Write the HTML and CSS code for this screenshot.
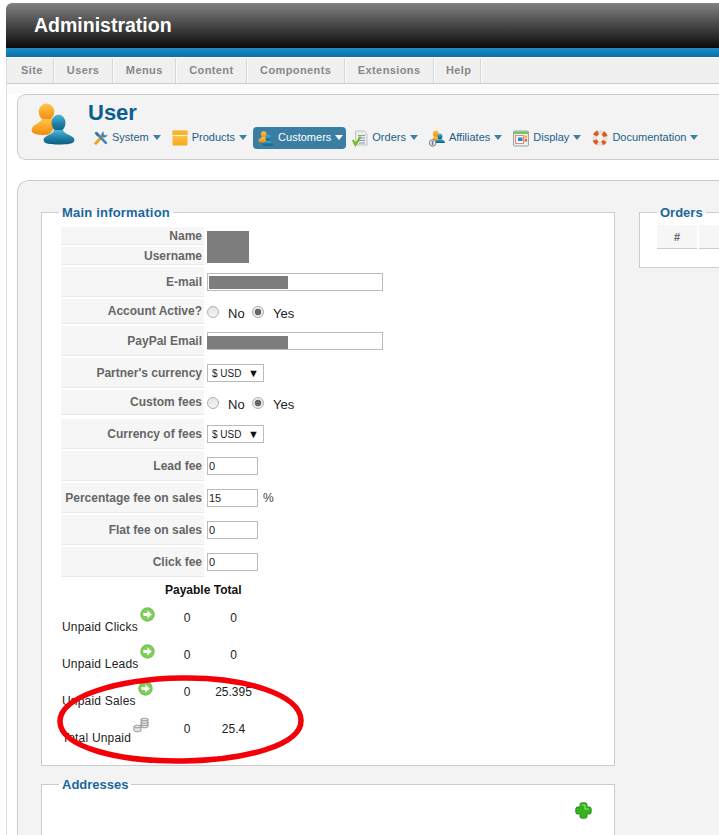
FILE: index.html
```html
<!DOCTYPE html>
<html lang="en">
<head>
<meta charset="utf-8">
<title>Administration</title>
<link rel="stylesheet" href="styles.css">
</head>
<body>
<svg class="defs" aria-hidden="true">
  <defs>
    <linearGradient id="gOrange" x1="0" y1="0" x2="0" y2="1"><stop offset="0" stop-color="#ffc648"/><stop offset="1" stop-color="#f08a0c"/></linearGradient>
    <linearGradient id="gBlue" x1="0" y1="0" x2="0" y2="1"><stop offset="0" stop-color="#4fb8dc"/><stop offset="0.55" stop-color="#1f7fa6"/><stop offset="1" stop-color="#0f5f80"/></linearGradient>
    <linearGradient id="gBox" x1="0" y1="0" x2="0" y2="1"><stop offset="0" stop-color="#ffd45e"/><stop offset="1" stop-color="#f8a818"/></linearGradient>
    <symbol id="people" viewBox="0 0 44 42">
      <ellipse cx="15.5" cy="9" rx="7.8" ry="8.6" fill="url(#gOrange)"/>
      <path d="M11 16 C9 21 1 21 0.6 27 C0.4 31 6 32 14 32 C18 32 20 30 22 27 L24 16 Z" fill="url(#gOrange)"/>
      <ellipse cx="27.5" cy="20" rx="7" ry="8.6" fill="url(#gBlue)"/>
      <path d="M23 27 C22 32 13 32 12.5 37 C12.5 41 20 41.5 28 41.5 C36 41.5 43.5 41 43.5 37 C43 32 33.5 32 32 27 Z" fill="url(#gBlue)"/>
    </symbol>
    <symbol id="go" viewBox="0 0 15 15">
      <circle cx="7.5" cy="7.5" r="7.2" fill="#76c652"/>
      <circle cx="7.5" cy="7.5" r="5.6" fill="#82d05c"/>
      <path d="M3.2 6 H7.4 V3.4 L11.8 7.5 L7.4 11.6 V9 H3.6 Z" fill="#fff"/>
    </symbol>
  </defs>
</svg>

<header class="brand">
  <div class="brand-bar"><h1 class="brand-title">Administration</h1></div>
  <div class="brand-stripe"></div>
</header>

<div class="shell">
  <nav class="topnav">
    <a class="topnav-item">Site</a>
    <a class="topnav-item">Users</a>
    <a class="topnav-item">Menus</a>
    <a class="topnav-item">Content</a>
    <a class="topnav-item">Components</a>
    <a class="topnav-item">Extensions</a>
    <a class="topnav-item">Help</a>
  </nav>

  <div class="workspace">
    <section class="toolbar">
      <svg class="toolbar-logo" width="44" height="42"><use href="#people"/></svg>
      <div class="toolbar-body">
        <h2 class="toolbar-title">User</h2>
        <ul class="menu">
          <li class="menu-item">
            <svg class="menu-icon" width="14" height="16" viewBox="0 0 16 17">
              <path d="M2 14.5 L10 6" stroke="#f0a020" stroke-width="3.4" stroke-linecap="round"/>
              <path d="M3 3 L13.5 14" stroke="#3f86b8" stroke-width="3" stroke-linecap="round"/>
              <path d="M2 1.5 L6 5 L4 7 L0.8 3.4 Z" fill="#3f6f98"/>
              <path d="M11 1 A4 4 0 0 0 8.8 6.6 L11 8 A4 4 0 0 0 15.3 4.6 L12.8 5.6 L11 4 Z" fill="#4d7fa6"/>
            </svg>
            <span>System</span><i class="caret"></i>
          </li>
          <li class="menu-item">
            <svg class="menu-icon" width="16" height="16" viewBox="0 0 16 16">
              <rect x="0.5" y="0.5" width="15" height="15" rx="1" fill="url(#gBox)"/>
              <rect x="0.5" y="0.5" width="15" height="5" fill="#f6b430"/>
              <path d="M0.5 5.5 H15.5" stroke="#fff3c4" stroke-width="1"/>
            </svg>
            <span>Products</span><i class="caret"></i>
          </li>
          <li class="menu-item is-active">
            <svg class="menu-icon" width="16" height="15"><use href="#people"/></svg>
            <span>Customers</span><i class="caret"></i>
          </li>
          <li class="menu-item">
            <svg class="menu-icon" width="16" height="17" viewBox="0 0 16 17">
              <path d="M3.5 1 H12 L15 4 V15 H3.5 Z" fill="#e8edf0" stroke="#b4bcc2" stroke-width="0.8"/>
              <path d="M6 5.5 H13 M6 8 H13 M6 10.5 H13 M7 13 H13" stroke="#8e9ba4" stroke-width="1"/>
              <path d="M0.8 10 L3.4 14.8 L8.6 6.6" fill="none" stroke="#7cb92a" stroke-width="2.2"/>
            </svg>
            <span>Orders</span><i class="caret"></i>
          </li>
          <li class="menu-item">
            <svg class="menu-icon" width="16" height="17" viewBox="0 0 16 17">
              <ellipse cx="6.8" cy="3.8" rx="2.9" ry="3.4" fill="url(#gOrange)"/>
              <path d="M3.5 11 C3.5 7.5 5 6.5 6.8 6.5 C8.5 6.5 9.8 8 10 11 Z" fill="url(#gOrange)"/>
              <ellipse cx="11" cy="6.5" rx="2.4" ry="3" fill="url(#gBlue)"/>
              <path d="M6.5 13 C7 10 9 9 11 9 C13.5 9 15.6 10.5 16 13 Z" fill="url(#gBlue)"/>
              <circle cx="3.6" cy="13" r="3.3" fill="#e4e9ee" stroke="#5c7d98" stroke-width="0.9"/>
              <path d="M3.6 10.8 V15.2 M2.6 12 H4.6 M2.6 14 H4.6" stroke="#4f6f8a" stroke-width="0.8"/>
            </svg>
            <span>Affiliates</span><i class="caret"></i>
          </li>
          <li class="menu-item">
            <svg class="menu-icon" width="16" height="17" viewBox="0 0 16 17">
              <rect x="0.5" y="1" width="15" height="15" rx="1" fill="#e9eef0" stroke="#9aa5a8"/>
              <rect x="1" y="1.5" width="14" height="2.4" fill="#6fc35a"/>
              <rect x="2.5" y="5.5" width="8" height="8" fill="#f4f7f8" stroke="#e08a86"/>
              <rect x="5" y="7.5" width="4.5" height="3.5" fill="#2d86b8"/>
              <rect x="11.5" y="5.5" width="2.6" height="2.6" fill="#f4b43c"/>
              <rect x="11.5" y="9" width="2.6" height="2.6" fill="#e4664a"/>
            </svg>
            <span>Display</span><i class="caret"></i>
          </li>
          <li class="menu-item">
            <svg class="menu-icon" width="16" height="16" viewBox="0 0 16 16">
              <circle cx="8" cy="8" r="5.6" fill="none" stroke="#e8e2dc" stroke-width="4.4"/>
              <circle cx="8" cy="8" r="5.6" fill="none" stroke="#dd5a20" stroke-width="4.4" stroke-dasharray="4.4 4.4" stroke-dashoffset="2.2" transform="rotate(45 8 8)"/>
            </svg>
            <span>Documentation</span><i class="caret"></i>
          </li>
        </ul>
      </div>
    </section>

    <main class="panel">
      <div class="panel-left">
        <fieldset class="box box-main">
          <legend class="box-legend">Main information</legend>

          <div class="row row-s"><label class="row-label">Name</label><div class="row-value"></div></div>
          <div class="row row-s"><label class="row-label">Username</label><div class="row-value"></div></div>
          <div class="redact redact-name"></div>

          <div class="row row-l"><label class="row-label">E-mail</label><div class="row-value"><span class="masked"><input class="field field-wide" type="text"><span class="redact redact-mail"></span></span></div></div>
          <div class="row row-m"><label class="row-label">Account Active?</label><div class="row-value">
            <input class="radio" type="radio" name="active"><span class="radio-text">No</span>
            <input class="radio" type="radio" name="active" checked><span class="radio-text">Yes</span>
          </div></div>
          <div class="row row-l"><label class="row-label">PayPal Email</label><div class="row-value"><span class="masked"><input class="field field-wide" type="text"><span class="redact redact-paypal"></span></span></div></div>
          <div class="row row-l"><label class="row-label">Partner's currency</label><div class="row-value"><span class="select">$ USD<i class="select-arrow">▼</i></span></div></div>
          <div class="row row-m row-after"><label class="row-label">Custom fees</label><div class="row-value">
            <input class="radio" type="radio" name="custom"><span class="radio-text">No</span>
            <input class="radio" type="radio" name="custom" checked><span class="radio-text">Yes</span>
          </div></div>
          <div class="row row-l"><label class="row-label">Currency of fees</label><div class="row-value"><span class="select">$ USD<i class="select-arrow">▼</i></span></div></div>
          <div class="row row-l"><label class="row-label">Lead fee</label><div class="row-value"><input class="field" type="text" value="0"></div></div>
          <div class="row row-l"><label class="row-label">Percentage fee on sales</label><div class="row-value"><input class="field" type="text" value="15"><span class="unit">%</span></div></div>
          <div class="row row-l"><label class="row-label">Flat fee on sales</label><div class="row-value"><input class="field" type="text" value="0"></div></div>
          <div class="row row-l"><label class="row-label">Click fee</label><div class="row-value"><input class="field" type="text" value="0"></div></div>

          <div class="sum-head">Payable Total</div>
          <div class="sum-row">
            <div class="sum-label"><span>Unpaid Clicks</span><svg class="sum-icon" width="15" height="15"><use href="#go"/></svg></div>
            <div class="sum-num">0</div><div class="sum-num">0</div>
          </div>
          <div class="sum-row">
            <div class="sum-label"><span>Unpaid Leads</span><svg class="sum-icon" width="15" height="15"><use href="#go"/></svg></div>
            <div class="sum-num">0</div><div class="sum-num">0</div>
          </div>
          <div class="sum-row">
            <div class="sum-label"><span>Unpaid Sales</span><svg class="sum-icon" width="15" height="15"><use href="#go"/></svg></div>
            <div class="sum-num">0</div><div class="sum-num">25.395</div>
          </div>
          <div class="sum-row">
            <div class="sum-label"><span>Total Unpaid</span>
              <svg class="sum-icon" width="16" height="16" viewBox="0 0 16 16">
                <g fill="#e4e4e4" stroke="#8a8a8a" stroke-width="0.9">
                  <path d="M8 2.5 C8 0.8 15 0.8 15 2.5 V9.5 C15 11.2 8 11.2 8 9.5 Z"/>
                  <path d="M8 2.5 C8 4.2 15 4.2 15 2.5 M8 5 C8 6.7 15 6.7 15 5 M8 7.3 C8 9 15 9 15 7.3" fill="none"/>
                  <path d="M1 9.5 C1 7.8 8 7.8 8 9.5 V13.5 C8 15.2 1 15.2 1 13.5 Z"/>
                  <path d="M1 9.5 C1 11.2 8 11.2 8 9.5" fill="none"/>
                </g>
              </svg>
            </div>
            <div class="sum-num">0</div><div class="sum-num">25.4</div>
          </div>
          <svg class="circle-mark" width="256" height="96" viewBox="0 0 256 96">
            <path d="M126 5 C190 4 244 22 245 47 C246 72 190 87 128 88 C62 89 5 74 4 49 C3 24 60 6 126 5 Z" fill="none" stroke="#f40008" stroke-width="5.5"/>
          </svg>
        </fieldset>

        <fieldset class="box box-addresses">
          <legend class="box-legend">Addresses</legend>
          <div class="add-row">
            <svg width="17" height="17" viewBox="0 0 17 17">
              <path d="M5 2 C5 0.2 12 0.2 12 2 V5 H15 C16.8 5 16.8 12 15 12 H12 V15 C12 16.8 5 16.8 5 15 V12 H2 C0.2 12 0.2 5 2 5 H5 Z" fill="#35b41e" stroke="#1f7d14" stroke-width="0.8"/>
              <path d="M6.5 3 H10 V7 H14" fill="none" stroke="#8fe66a" stroke-width="1.2"/>
            </svg>
          </div>
        </fieldset>
      </div>

      <div class="panel-right">
        <fieldset class="box box-orders">
          <legend class="box-legend">Orders</legend>
          <div class="orders-head">
            <div class="orders-cell orders-cell-num">#</div>
            <div class="orders-cell"></div>
          </div>
        </fieldset>
      </div>
    </main>
  </div>
</div>
</body>
</html>
```

FILE: styles.css
```css
* { box-sizing: border-box; }

html, body {
  margin: 0;
  height: 835px;
  overflow: hidden;
  background: #fff;
  font-family: "Liberation Sans", Arial, sans-serif;
  font-size: 12px;
  color: #222;
}

.defs { position: absolute; width: 0; height: 0; }

.brand { margin: 3px 0 0 6px; }
.brand-bar {
  height: 45px;
  border-top-left-radius: 6px;
  background: linear-gradient(#828282, #0a0a0a);
  padding-left: 28px;
}
.brand-title {
  margin: 0;
  font-size: 19.5px;
  line-height: 44px;
  font-weight: bold;
  color: #fff;
}
.brand-stripe {
  height: 9px;
  background: linear-gradient(#1a8ec6, #0c6fa8);
}

.shell {
  margin: 1px 0 0 6px;
  border-left: 1px solid #ddd;
}

.topnav {
  display: flex;
  height: 26px;
  background: #f0f0f0;
  border-bottom: 1px solid #ccc;
}
.topnav-item {
  padding: 0 12.5px 0 13px;
  border-right: 1px solid #d8d8d8;
  box-shadow: 1px 0 0 #fafafa;
  font-size: 11px;
  font-weight: bold;
  letter-spacing: 0.4px;
  line-height: 24px;
  color: #888;
}
.topnav-item:first-child { padding: 0 10px 0 14px; }
.topnav-item:last-child { padding: 0 9px 0 12px; }

.workspace {
  padding: 0 0 0 10px;
  background: linear-gradient(#fafafa 10px, #fff 10px);
}

.toolbar {
  position: relative;
  top: 10px;
  display: flex;
  width: 800px;
  height: 66px;
  border: 1px solid #ccc;
  border-right: 0;
  border-radius: 9px 0 0 9px;
  background: #f3f3f3;
  padding: 8px 0 0 13px;
}
.toolbar-logo { flex: none; }
.toolbar-body { margin: -4px 0 0 1px; }
.toolbar-title {
  margin: 0 0 0 12px;
  font-size: 22px;
  line-height: 28px;
  font-weight: bold;
  color: #0b5e92;
}

.menu {
  display: flex;
  gap: 1px;
  margin: 0 0 0 13px;
  padding: 0;
  list-style: none;
}
.menu-item {
  display: flex;
  align-items: center;
  height: 22px;
  padding: 0 5px 2px;
  border-radius: 4px;
  font-size: 11px;
  color: #1b6088;
  white-space: nowrap;
}
.menu-icon { flex: none; margin: 2px 4px 0 0; }
.caret {
  width: 0;
  height: 0;
  margin-left: 4px;
  border-style: solid;
  border-width: 5px 4px 0;
  border-color: #3f7fa3 transparent transparent;
}
.menu-item.is-active {
  padding-right: 3px;
  background: #3a7ea3;
  color: #fff;
}
.is-active .caret { border-top-color: #fff; }

.panel {
  position: relative;
  display: flex;
  gap: 24px;
  width: 900px;
  height: 700px;
  margin-top: 30px;
  padding: 22px 0 0 23px;
  background: #f3f3f3;
  border: 1px solid #ccc;
  border-right: 0;
  border-top-left-radius: 12px;
}
.panel-left { flex: none; width: 574px; }
.panel-right { flex: none; width: 220px; }

.box {
  position: relative;
  min-width: 0;
  margin: 0;
  padding: 6px 0 0 19px;
  background: #fff;
  border: 1px solid #ccc;
}
.box-legend {
  margin-left: -2px;
  padding: 2px 3px 0;
  font-size: 13px;
  line-height: 16px;
  font-weight: bold;
  color: #1a669e;
}
.box-main .box-legend { letter-spacing: 0.2px; }
.box-main { height: 563px; }
.box-addresses { height: 200px; margin-top: 9px; }
.box-orders { height: 65px; padding-left: 17px; padding-top: 4px; }
.box-orders .box-legend { margin-left: 0; }

.row { display: flex; margin-bottom: 2px; }
.row-s { height: 18px; }
.row-m { height: 25px; }
.row-l { height: 30px; }
.row-after { margin-bottom: 4px; }
.row-label {
  flex: none;
  display: flex;
  align-items: center;
  justify-content: flex-end;
  width: 143px;
  padding-right: 2px;
  background: #f6f6f6;
  border-bottom: 1px solid #e9e9e9;
  font-weight: bold;
  color: #666;
  white-space: nowrap;
}
.row-value {
  display: flex;
  align-items: center;
  padding-left: 3px;
}

.masked { position: relative; display: block; height: 18px; }
.field {
  display: block;
  width: 51px;
  height: 18px;
  margin: 0;
  padding: 0 1px;
  border: 1px solid #bbb;
  background: #fff;
  font: 11px "Liberation Sans", Arial, sans-serif;
  color: #222;
}
.field-wide { width: 176px; }
.unit { margin-left: 5px; color: #444; }

.redact { position: absolute; background: #7d7d7d; }
.redact-name { left: 165px; top: 10px; width: 42px; height: 32px; }
.redact-mail { left: 2px; top: 3px; width: 79px; height: 13px; }
.redact-paypal { left: 0; top: 4px; width: 81px; height: 13px; }

.radio {
  appearance: none;
  flex: none;
  width: 12px;
  height: 12px;
  margin: 0;
  border: 1px solid #b0b0b0;
  border-radius: 50%;
  background: linear-gradient(#e4e4e4, #f4f4f4);
}
.radio:checked {
  background: radial-gradient(circle, #666 0 3px, #e8e8e8 3.6px);
}
.radio-text {
  position: relative;
  top: 2px;
  width: 33px;
  padding-left: 9px;
  font-size: 13px;
  color: #222;
}

.select {
  display: flex;
  align-items: center;
  justify-content: space-between;
  width: 57px;
  height: 18px;
  padding: 0 4px;
  border: 1px solid #bbb;
  background: #fff;
  font-size: 10px;
  color: #222;
}
.select-arrow { font-style: normal; font-size: 11px; color: #111; }

.sum-head {
  height: 21px;
  padding-left: 104px;
  font-weight: bold;
  line-height: 22px;
  color: #111;
}
.sum-row {
  display: grid;
  grid-template-columns: 104px 44px 49px;
  height: 37px;
}
.sum-label {
  display: flex;
  align-items: flex-end;
  gap: 2px;
  padding: 0 0 3px 1px;
  letter-spacing: 0.2px;
  white-space: nowrap;
  color: #222;
}
.sum-icon { flex: none; margin-bottom: 12px; }
.sum-num {
  display: flex;
  align-items: center;
  justify-content: center;
  padding-bottom: 2px;
  color: #222;
}

.circle-mark { position: absolute; left: 14px; top: 452px; }

.add-row {
  display: flex;
  justify-content: flex-end;
  padding: 3px 22px 0 0;
}

.orders-head { display: flex; gap: 2px; }
.orders-cell {
  width: 60px;
  height: 24px;
  background: #f6f6f6;
  border-bottom: 1px solid #ccc;
}
.orders-cell-num {
  width: 40px;
  text-align: center;
  line-height: 24px;
  font-weight: bold;
  font-size: 11px;
  color: #666;
}
```
